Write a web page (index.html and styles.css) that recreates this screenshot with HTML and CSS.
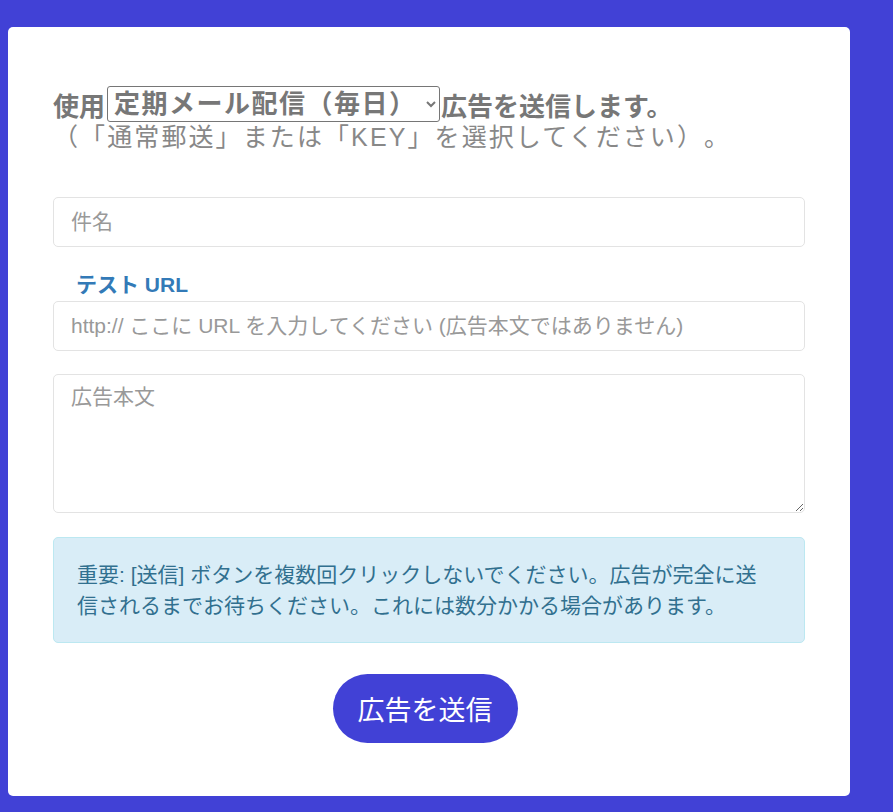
FILE: index.html
```html
<!DOCTYPE html>
<html lang="ja">
<head>
<meta charset="UTF-8" />
<meta name="viewport" content="width=device-width, initial-scale=1" />
<title>広告を送信</title>
<link rel="stylesheet" href="styles.css">
</head>
<body>
<div class="card" role="main">
<form class="ad-form">
<h2 class="intro">
<span class="intro-main">使用<select class="mode" name="mode">
<option>定期メール配信（毎日）</option>
<option>通常郵送</option>
<option>KEY</option>
</select>広告を送信します。</span>
<span class="intro-sub">（「通常郵送」または「KEY」を選択してください）。</span>
</h2>
<input class="field" type="text" name="subject" placeholder="件名" />
<label class="test-label" for="test-url">テスト URL</label>
<input class="field" type="text" id="test-url" name="url" placeholder="http:// ここに URL を入力してください (広告本文ではありません)" />
<textarea class="field body-field" name="body" placeholder="広告本文"></textarea>
<div class="notice">重要: [送信] ボタンを複数回クリックしないでください。広告が完全に送信されるまでお待ちください。これには数分かかる場合があります。</div>
<div class="actions">
<button type="submit" class="send">広告を送信</button>
</div>
</form>
</div>
</body>
</html>
```

FILE: styles.css
```css
:root {
--brand: #4141d6;
--muted: #777;
--field-border: #e3e3e3;
--font-family: 'Liberation Sans', 'Noto Sans CJK JP', sans-serif;
}
* {
box-sizing: border-box;
}
body {
margin: 0;
background: var(--brand);
font-family: var(--font-family);
text-spacing-trim: space-all;
padding: 27px 43px 16px 8px;
min-height: 100vh;
}
.card {
background: #fff;
border-radius: 5px;
padding: 59px 45px 53px;
}
.ad-form {
display: flex;
flex-direction: column;
}
.intro {
margin: 0 0 45px;
color: var(--muted);
font-size: 26px;
}
.intro-main {
display: flex;
align-items: center;
height: 36px;
font-weight: 700;
}
.intro-sub {
display: block;
font-weight: 400;
font-size: 25px;
line-height: 30px;
letter-spacing: 2.1px;
color: #888;
}
.mode {
font: inherit;
color: inherit;
letter-spacing: 1.5px;
width: 333px;
height: 36px;
padding: 0 2px;
border: 1px solid #767676;
border-radius: 3px;
background: #fff;
margin: 0 1px 0 2px;
}
.field {
width: 100%;
height: 50px;
padding: 0 17px;
border: 1px solid var(--field-border);
border-radius: 5px;
font: inherit;
font-size: 21px;
color: #555;
}
.field::placeholder {
color: #999;
}
.test-label {
margin: 26px 0 4px 23px;
color: #337ab7;
font-weight: 700;
font-size: 21px;
line-height: 24px;
}
.body-field {
margin-top: 23px;
height: 139px;
padding: 5px 17px;
resize: vertical;
}
.notice {
margin-top: 24px;
padding: 21px 30px 21px 23px;
background: #d9edf7;
border: 1px solid #bce8f1;
border-radius: 5px;
color: #31708f;
font-size: 21px;
line-height: 31px;
}
.actions {
display: flex;
justify-content: center;
margin-top: 31px;
padding-right: 8px;
}
.send {
background: var(--brand);
color: #fff;
border: none;
border-radius: 35px;
height: 69px;
padding: 0 25px;
font: inherit;
font-size: 27px;
cursor: pointer;
}
```
